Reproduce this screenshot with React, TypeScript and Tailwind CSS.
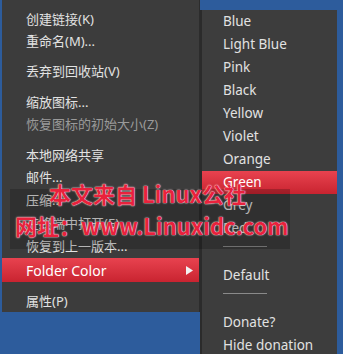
import React from "react";

type Row = { t?: string; h: number; sep?: boolean; dim?: boolean; hl?: boolean; arrow?: boolean };

const leftRows: Row[] = [
  { h: 9, sep: true },
  { t: "创建链接(K)", h: 22 },
  { t: "重命名(M)...", h: 22 },
  { h: 8, sep: true },
  { t: "丢弃到回收站(V)", h: 22 },
  { h: 9, sep: true },
  { t: "缩放图标...", h: 22 },
  { t: "恢复图标的初始大小(Z)", h: 22, dim: true },
  { h: 9, sep: true },
  { t: "本地网络共享", h: 22 },
  { t: "邮件...", h: 23 },
  { t: "压缩...", h: 23 },
  { t: "在终端中打开(E)", h: 23 },
  { t: "恢复到上一版本...", h: 23 },
  { t: "Folder Color", h: 24, hl: true, arrow: true },
  { h: 8, sep: true },
  { t: "属性(P)", h: 22 },
];

type SRow = { t?: string; line?: boolean; hl?: boolean };
const subRows: SRow[] = [
  { t: "Blue" },
  { t: "Light Blue" },
  { t: "Pink" },
  { t: "Black" },
  { t: "Yellow" },
  { t: "Violet" },
  { t: "Orange" },
  { t: "Green", hl: true },
  { t: "Grey" },
  { t: "Red" },
  { line: true },
  { t: "Default" },
  { line: true },
  { t: "Donate?" },
  { t: "Hide donation" },
];

export default function App() {
  return (
    <div
      className="relative w-[343px] h-[354px] overflow-hidden bg-[#2d5c9c] text-[13px] text-[#e2e2e2]"
      style={{ fontFamily: '"Noto Sans", "Noto Sans CJK SC", sans-serif' }}
    >
      <div className="flex items-start h-full">
        {/* left menu */}
        <div className="ml-[2px] w-[198px] h-[312px] bg-[#3c3c3c] flex flex-col border-r border-[#2c2c2c]">
          {leftRows.map((r, i) =>
            r.sep ? (
              <div key={i} style={{ height: r.h }} />
            ) : (
              <div
                key={i}
                style={{ height: r.h }}
                className={
                  "flex items-center pl-[24px] pr-[6px] leading-none " +
                  (r.hl ? "bg-gradient-to-b from-[#e8424f] to-[#c92330] text-white " : "") +
                  (r.dim ? "text-[#9a9a9a] " : "")
                }
              >
                <span className={"flex-1 " + (r.hl ? "text-[14px] pt-[1px]" : "")}>{r.t}</span>
                {r.arrow && (
                  <svg width="7" height="9" viewBox="0 0 7 9">
                    <path d="M0 0 L7 4.5 L0 9 Z" fill="#f2f2f2" />
                  </svg>
                )}
              </div>
            )
          )}
        </div>
        {/* submenu */}
        <div className="mt-[10px] w-[137px] h-[344px] bg-[#3d3d3d] border-l-2 border-[#2b2b2b] flex flex-col text-[13.5px]">
          {subRows.map((r, i) =>
            r.line ? (
              <div key={i} className="h-[24px] pt-[6px] pl-[21px] shrink-0">
                <div className="w-[44px] h-px bg-[#8a8a8a]" />
              </div>
            ) : (
              <div
                key={i}
                className={
                  "h-[23px] shrink-0 flex items-center pl-[21px] pt-[1px] leading-none " +
                  (r.hl ? "bg-gradient-to-b from-[#e8424f] to-[#c92330] text-white" : "")
                }
              >
                {r.t}
              </div>
            )
          )}
        </div>
      </div>

      {/* watermark overlay */}
      <div className="absolute left-[10px] top-[189px] w-[280px] h-[60px] bg-black/20" />
      <div
        className="absolute left-[49px] top-[182px] text-[22px] font-bold leading-none text-[#e8223c] whitespace-nowrap [text-shadow:0_0_1px_#fff,0_0_2px_#ffd0d8]"
        style={{ fontFamily: '"Noto Sans CJK SC", "DejaVu Sans", sans-serif' }}
      >
        本文来自 Linux公社
      </div>
      <div
        className="absolute left-[15px] top-[214px] text-[22px] font-bold leading-none text-[#e8223c] whitespace-nowrap [text-shadow:0_0_1px_#fff,0_0_2px_#ffd0d8]"
        style={{ fontFamily: '"Noto Sans CJK SC", "DejaVu Sans", sans-serif' }}
      >
        网址：www.Linuxidc.com
      </div>
    </div>
  );
}
